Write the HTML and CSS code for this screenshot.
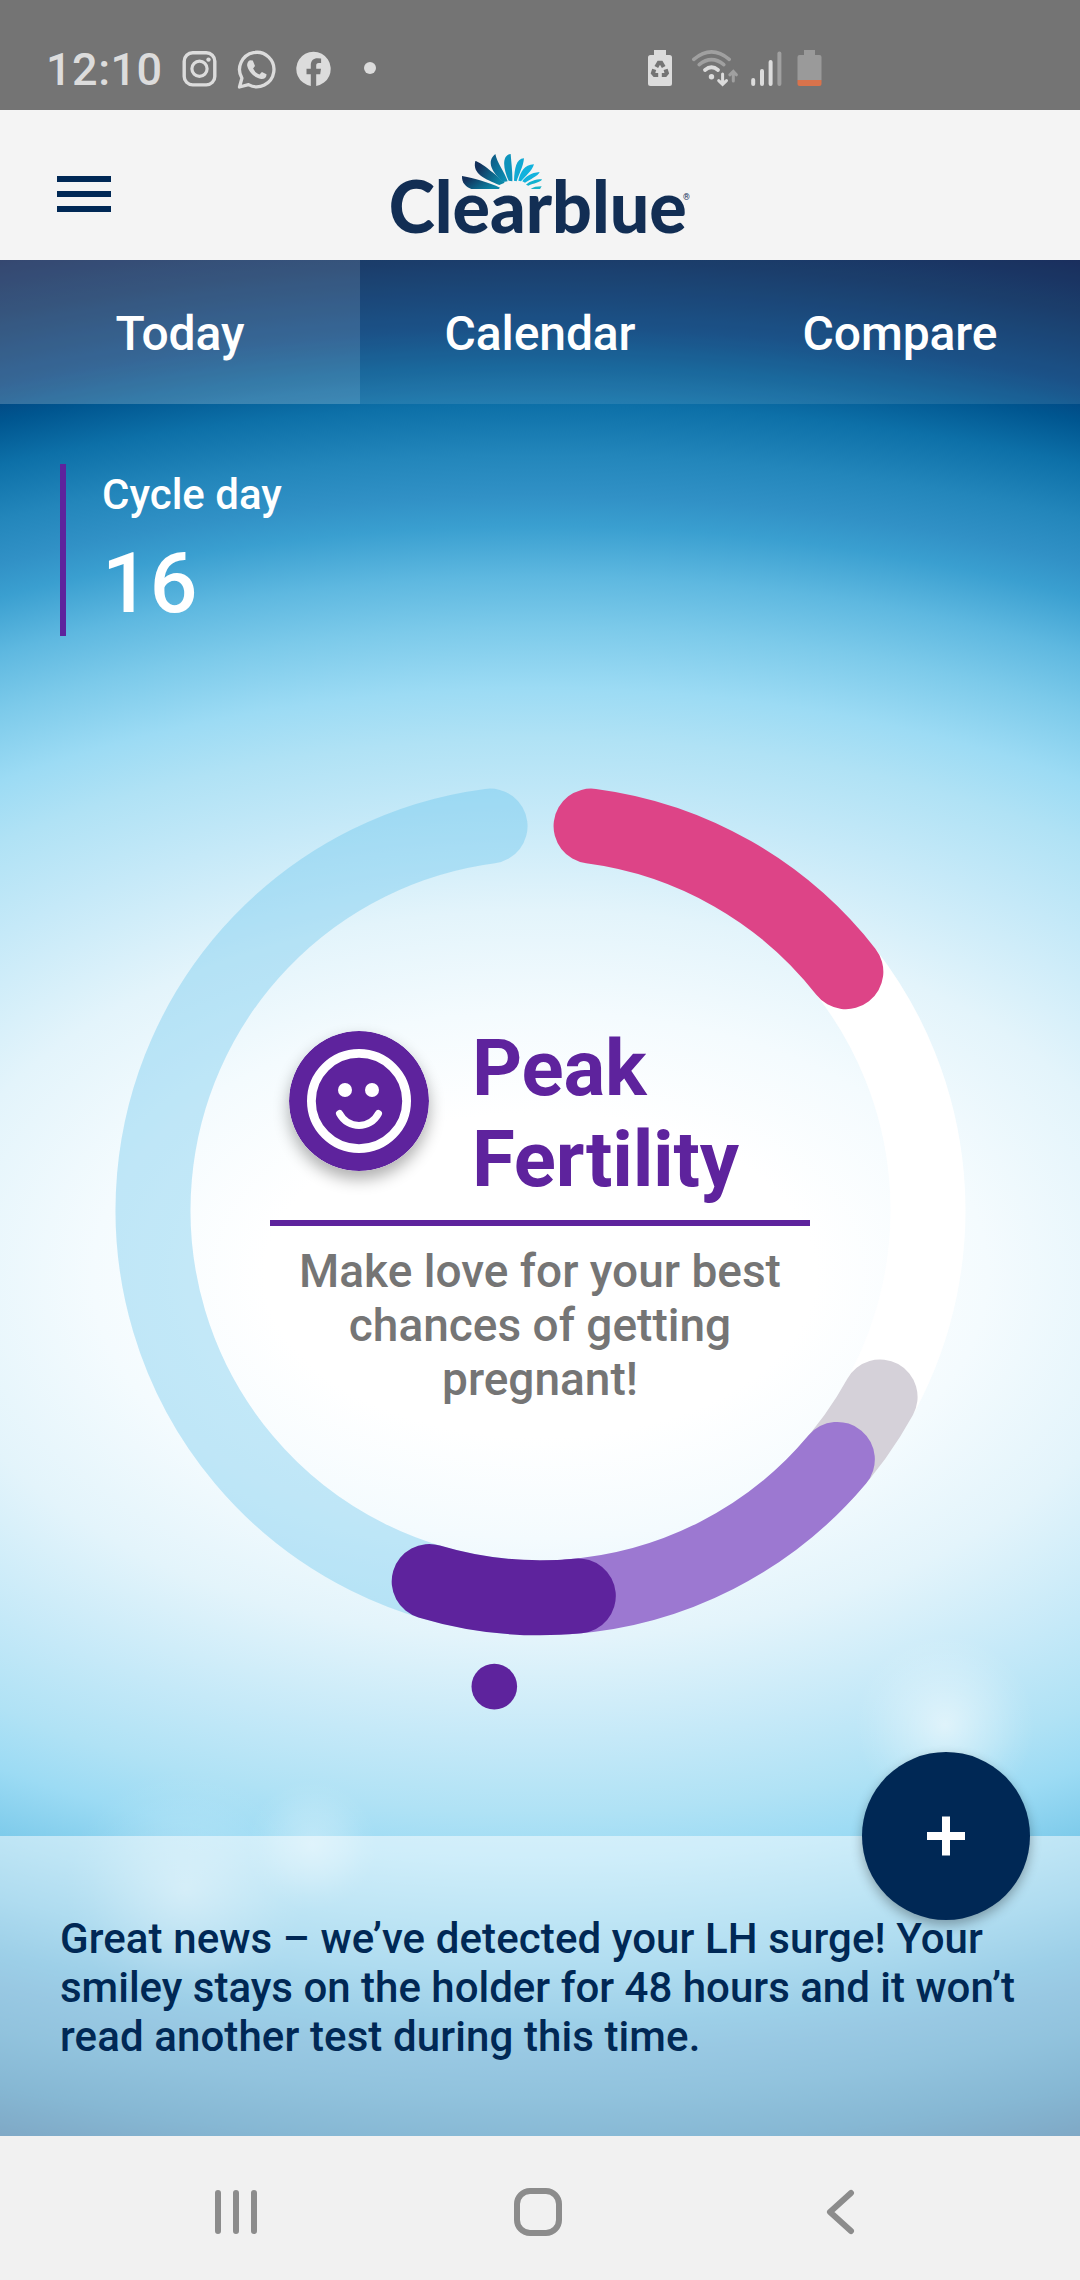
FILE: index.html
```
<!DOCTYPE html>
<html lang="en">
<head>
    <meta charset="UTF-8">
    <meta name="viewport" content="width=device-width, initial-scale=1.0">
    <title>Clearblue - Today</title>
    <link rel="stylesheet" href="styles.css">
</head>
<body>
    <div class="status-bar">
        <span class="time">12:10</span>
        <svg class="icon-instagram" width="35" height="36" viewBox="0 0 34 36" fill="none" stroke="#dcdcdc">
            <rect x="1.7" y="1.7" width="30.6" height="32.2" rx="8.5" stroke-width="3.4"/>
            <circle cx="17" cy="17.8" r="7.6" stroke-width="3.2"/>
            <circle cx="26" cy="8.6" r="2.2" fill="#dcdcdc" stroke="none"/>
        </svg>
        <svg class="icon-whatsapp" width="39" height="39" viewBox="0 0 38 39" fill="none">
            <path d="M2 37L4.4 28.2A17.2 17.2 0 1 1 11 34.6Z" stroke="#dcdcdc" stroke-width="3.3" stroke-linejoin="round"/>
            <path d="M12.5 10.2L15.3 10.6L17.5 16L15.6 18.6C17 21.4 19 23.4 22 24.6L24.4 22L29 24.3C29.2 27.5 26.6 29.2 23.6 28.9C16.6 27.8 10.4 20.7 9.6 15.2C9.6 13 10.6 10.9 12.5 10.2Z" fill="#dcdcdc"/>
        </svg>
        <svg class="icon-facebook" width="35" height="36" viewBox="0 0 34 36">
            <path d="M14.3 34.9V23.2H10V17.8H14.3V14.3C14.3 9.6 17 7.2 21 7.2L24.6 7.5V12H22.4C20.3 12 19.7 13.2 19.7 14.6V17.8H24.5L23.7 23.2H19.7V34.9A17.2 17.2 0 1 0 14.3 34.9Z" fill="#dcdcdc"/>
        </svg>
        <span class="more-dot"></span>
        <svg class="icon-saver" width="24" height="36" viewBox="0 0 24 36">
            <path d="M6 0H18V5H21.5Q24 5 24 7.5V33.5Q24 36 21.5 36H2.5Q0 36 0 33.5V7.5Q0 5 2.5 5H6Z" fill="#dcdcdc"/>
            <g fill="none" stroke="#747474" stroke-width="4.2">
                <path d="M8.3 17L10.8 12.8H13.2L15.7 17"/>
                <path d="M17.6 19.3L18.8 23L17.2 25H13.8"/>
                <path d="M6.2 19.3L5 23L6.6 25H10.2"/>
            </g>
        </svg>
        <svg class="icon-wifi" width="48" height="37" viewBox="0 0 46 37" fill="none" stroke-linecap="round">
            <path d="M1.8 9.4Q19.5 -5.6 37.2 9.4" stroke="#a0a0a0" stroke-width="3.6"/>
            <path d="M7.2 14.6Q19.5 4.6 31.8 14.6" stroke="#a0a0a0" stroke-width="3.6"/>
            <path d="M13 20Q19.5 14.6 26 20" stroke="#dcdcdc" stroke-width="3.8"/>
            <circle cx="19.5" cy="26.8" r="2.7" fill="#dcdcdc"/>
            <path d="M30.6 24V34M26.7 30.6L30.6 34.4L34.5 30.6" stroke="#dcdcdc" stroke-width="3"/>
            <path d="M41.3 31V21.6M37.8 24.8L41.3 21.4L44.4 24.8" stroke="#a0a0a0" stroke-width="3"/>
        </svg>
        <svg class="icon-signal" width="31" height="35" viewBox="0 0 31 35" stroke="#dcdcdc" stroke-width="4" stroke-linecap="round">
            <path d="M2.2 29V33M11 20V33M19.6 11V33"/>
            <path d="M28.4 2.5V33" stroke="#a0a0a0"/>
        </svg>
        <svg class="icon-battery" width="25" height="36" viewBox="0 0 24 36">
            <path d="M6.5 0H17.5V5H22Q24 5 24 7V30H0V7Q0 5 2 5H6.5Z" fill="#9a9a9a"/>
            <path d="M0 30H24V34Q24 36 22 36H2Q0 36 0 34Z" fill="#d9734c"/>
        </svg>
    </div>

    <header class="header">
        <div class="menu-button">
            <span></span>
            <span></span>
            <span></span>
        </div>
        <svg class="logo" width="340" height="110" viewBox="0 0 1020 330">
            <defs>
                <linearGradient id="petal-dark" x1="0" y1="0" x2="1" y2="0.5">
                    <stop offset="0.2" stop-color="#12305a"/>
                    <stop offset="1" stop-color="#0b86a6"/>
                </linearGradient>
                <linearGradient id="petal-mid" x1="0" y1="0" x2="1" y2="1">
                    <stop offset="0" stop-color="#0d5580"/>
                    <stop offset="1" stop-color="#0c94b8"/>
                </linearGradient>
            </defs>
            <path d="M276 108C304 113 360 128 390 143L386 147H304C286 140 275 128 276 108Z" fill="url(#petal-dark)"/>
            <path d="M316 63C332 66 380 106 404 128L388 135C346 117 306 102 316 63Z" fill="url(#petal-dark)"/>
            <path d="M376 42C380 66 405 98 413 124L400 126C366 98 348 64 376 42Z" fill="url(#petal-mid)"/>
            <path d="M422 42C424 70 428 98 427 124L416 122C400 90 394 46 422 42Z" fill="#0d93bb"/>
            <path d="M462 55C460 80 446 104 440 124L432 122C434 85 438 56 462 55Z" fill="#12a9d3"/>
            <path d="M492 73C487 92 465 110 453 124L445 122C452 95 462 75 492 73Z" fill="#12b2dd"/>
            <path d="M509 96C504 108 480 118 465 128L457 124C466 110 483 98 509 96Z" fill="#12b2dd"/>
            <path d="M516 118C512 128 490 130 475 137L468 134C480 124 495 118 516 118Z" fill="#12b2cf"/>
            <path d="M515 139L510 147H482C490 141 500 139 515 139Z" fill="#18b4c8"/>
            <text class="logo-name" x="56" y="279" textLength="894" lengthAdjust="spacingAndGlyphs">Clearblue</text>
            <text class="logo-mark" x="939" y="180">®</text>
        </svg>
    </header>

    <main class="main">
        <nav class="tabs">
            <a class="tab active">Today</a>
            <a class="tab">Calendar</a>
            <a class="tab">Compare</a>
        </nav>

        <section class="cycle">
            <p class="cycle-label">Cycle day</p>
            <p class="cycle-number">16</p>
        </section>

        <section class="chart">
            <svg class="ring" width="900" height="940" viewBox="90 780 900 940">
                <g class="arcs">
                    <circle class="arc remaining" cx="540.5" cy="1210.3" r="387.5" pathLength="360" stroke-dasharray="167.5 360" transform="rotate(95 540.5 1210.3)"/>
                    <circle class="arc low" cx="540.5" cy="1210.3" r="387.5" pathLength="360" stroke-dasharray="66 360" transform="rotate(-38 540.5 1210.3)"/>
                    <circle class="arc period" cx="540.5" cy="1210.3" r="387.5" pathLength="360" stroke-dasharray="44.5 360" transform="rotate(-82.5 540.5 1210.3)"/>
                    <circle class="arc tested" cx="540.5" cy="1210.3" r="387.5" pathLength="360" stroke-dasharray="14 360" transform="rotate(28.8 540.5 1210.3)"/>
                    <circle class="arc high" cx="540.5" cy="1210.3" r="387.5" pathLength="360" stroke-dasharray="46 360" transform="rotate(40 540.5 1210.3)"/>
                    <circle class="arc peak" cx="540.5" cy="1210.3" r="387.5" pathLength="360" stroke-dasharray="22.3 360" transform="rotate(84.4 540.5 1210.3)"/>
                </g>
                <circle class="today-dot" cx="494.3" cy="1686.6" r="22.8"/>
            </svg>

            <div class="result">
                <div class="result-title">
                    <svg class="smiley" width="140" height="140" viewBox="-70 -70 140 140">
                        <circle r="70" fill="#5e239d"/>
                        <circle r="47.6" fill="none" stroke="#fff" stroke-width="8.8"/>
                        <circle cx="-14" cy="-11" r="7" fill="#fff"/>
                        <circle cx="13" cy="-11" r="7" fill="#fff"/>
                        <path d="M-19.5 12.5C-11 28.5 11 28.5 19.5 12.5" fill="none" stroke="#fff" stroke-width="7" stroke-linecap="round"/>
                    </svg>
                    <h1>Peak<br>Fertility</h1>
                </div>
                <p class="advice">Make love for your best<br>chances of getting<br>pregnant!</p>
            </div>
        </section>

        <section class="message">
            <button class="add-button">
                <svg width="40" height="40" viewBox="0 0 40 40">
                    <path d="M16 0.5H24V16H39V24H24V39.5H16V24H1V16H16Z" fill="#fff"/>
                </svg>
            </button>
            <p><span class="wide">Great news – we’ve detected your LH surge! Your</span><br>smiley stays on the holder for 48 hours and it won’t<br><span class="wide">read another test during this time.</span></p>
        </section>
    </main>

    <footer class="nav-bar">
        <svg width="44" height="48" viewBox="0 0 44 48"><path d="M4 5V43M22 5V43M40 5V43"/></svg>
        <svg class="home" width="48" height="48" viewBox="0 0 48 48"><rect x="3" y="3" width="42" height="42" rx="13"/></svg>
        <svg width="30" height="48" viewBox="0 0 30 48"><path d="M26 5L5 24L26 43"/></svg>
    </footer>
</body>
</html>
```
FILE: styles.css
```
* {
    box-sizing: border-box;
}

body {
    width: 1080px;
    height: 2280px;
    margin: 0;
    display: flex;
    flex-direction: column;
    font-family: Roboto, "Liberation Sans", sans-serif;
    font-weight: 500;
}

p, h1 {
    margin: 0;
}

/* phone status bar */
.status-bar {
    height: 110px;
    padding: 50px 0 0 46px;
    background-color: #747474;
    display: flex;
    align-items: flex-start;
}

.time {
    width: 136px;
    height: 39px;
    color: #dcdcdc;
    font-size: 45px;
    line-height: 39px;
    letter-spacing: 0.5px;
}

.icon-instagram {
    margin-top: 1px;
}

.icon-whatsapp {
    margin-left: 20px;
}

.icon-facebook {
    margin: 1px 0 0 20px;
}

.more-dot {
    width: 12px;
    height: 12px;
    margin: 12px 0 0 33px;
    border-radius: 50%;
    background-color: #dcdcdc;
}

.icon-saver {
    margin: 0 0 0 272px;
}

.icon-wifi {
    margin-left: 19px;
}

.icon-signal {
    margin: 1px 0 0 12px;
}

.icon-battery {
    margin: 0 0 0 15px;
}

/* header */
.header {
    height: 150px;
    padding: 30px 0 0 57px;
    background-color: #f4f4f4;
    display: flex;
}

.menu-button {
    width: 54px;
    margin: 36px 259px 0 0;
    display: flex;
    flex-direction: column;
    gap: 9px;
}

.menu-button span {
    height: 6px;
    background-color: #002855;
}

.logo-name {
    font-family: Lato, sans-serif;
    font-size: 216px;
    font-weight: 900;
    fill: #122e54;
}

.logo-mark {
    font-size: 26px;
    font-weight: 400;
    fill: #122e54;
}

/* main screen */
.main {
    height: 1876px;
    display: flex;
    flex-direction: column;
    background:
        radial-gradient(circle 90px at 945px 1465px, rgba(255, 255, 255, 0.55), rgba(255, 255, 255, 0.3) 40%, rgba(255, 255, 255, 0.08) 80%, transparent),
        radial-gradient(circle 65px at 312px 1585px, rgba(255, 255, 255, 0.35), rgba(255, 255, 255, 0.18) 50%, rgba(255, 255, 255, 0.05) 80%, transparent),
        radial-gradient(circle 120px at 185px 1630px, rgba(255, 255, 255, 0.35), rgba(255, 255, 255, 0.15) 50%, rgba(255, 255, 255, 0.04) 80%, transparent),
        radial-gradient(ellipse 1720px 1012px at 540px 1015px, #fff 16%, #f4fbfe 26%, #e3f4fb 36%, #c5e9f8 46%, #b0e2f5 53%, #9cdbf4 58%, #7ccaea 64%, #5eb8e0 69%, #3a9fd0 74%, #3191c6 77%, #2386bb 81%, #0d70a8 86%, #005690 90%, #023f7b 93.5%, #02295c 100%, #001448 106%);
}

.tabs {
    height: 144px;
    display: flex;
    background-color: rgba(255, 255, 255, 0.1);
}

.tab {
    flex: 1;
    color: #fff;
    font-size: 48px;
    line-height: 148px;
    letter-spacing: -0.1px;
    text-align: center;
}

.tab.active {
    background-color: rgba(255, 255, 255, 0.12);
}

.cycle {
    height: 172px;
    margin: 60px 0 0 60px;
    padding: 6px 0 0 36px;
    border-left: 6px solid #5e239d;
    color: #fff;
}

.cycle-label {
    font-size: 42px;
    line-height: 49px;
}

.cycle-number {
    margin-top: 16px;
    font-size: 84px;
    line-height: 98px;
}

/* cycle ring with the result inside */
.chart {
    height: 1200px;
    display: grid;
    justify-items: center;
}

.ring, .result {
    grid-area: 1 / 1;
}

.ring {
    margin-top: 144px;
}

.arc {
    fill: none;
    stroke-width: 75px;
    stroke-linecap: round;
}

.remaining {
    stroke: rgba(92, 192, 235, 0.35);
}

.low {
    stroke: #fff;
}

.period {
    stroke: #dd4487;
}

.tested {
    stroke: #d5d1d9;
}

.high {
    stroke: #9c78d1;
}

.peak {
    stroke: #5e239d;
}

.today-dot {
    fill: #5e239d;
}

.result {
    width: 540px;
    margin-top: 386px;
}

.result-title {
    height: 204px;
    padding-left: 19px;
    display: flex;
    border-bottom: 6px solid #5e239d;
}

.smiley {
    margin: 9px 43px 0 0;
    border-radius: 50%;
    box-shadow: 0 8px 16px rgba(0, 0, 0, 0.32);
}

.result h1 {
    margin-top: 1px;
    color: #5e239d;
    font-size: 78px;
    font-weight: 700;
    line-height: 91px;
    letter-spacing: -0.2px;
}

.advice {
    margin-top: 18px;
    color: #757575;
    font-size: 46px;
    line-height: 54px;
    text-align: center;
    white-space: nowrap;
}

/* bottom message */
.message {
    position: relative;
    height: 300px;
    padding: 78px 0 0 60px;
    background-color: rgba(255, 255, 255, 0.5);
    color: #002855;
    font-size: 42px;
    line-height: 49px;
    white-space: nowrap;
}

.message .wide {
    letter-spacing: 0.1px;
}

.add-button {
    position: absolute;
    top: -84px;
    right: 50px;
    width: 168px;
    height: 168px;
    padding: 0;
    display: flex;
    align-items: center;
    justify-content: center;
    border: none;
    border-radius: 50%;
    background-color: #002855;
    box-shadow: 0 5px 12px rgba(0, 0, 0, 0.3);
}

/* phone navigation */
.nav-bar {
    height: 144px;
    padding: 52px 225px 0 214px;
    display: flex;
    justify-content: space-between;
    background-color: #f1f1f1;
}

.nav-bar svg {
    fill: none;
    stroke: #8c8c8c;
    stroke-width: 6px;
    stroke-linecap: round;
    stroke-linejoin: round;
}

.nav-bar .home {
    margin-right: 8px;
}
```
